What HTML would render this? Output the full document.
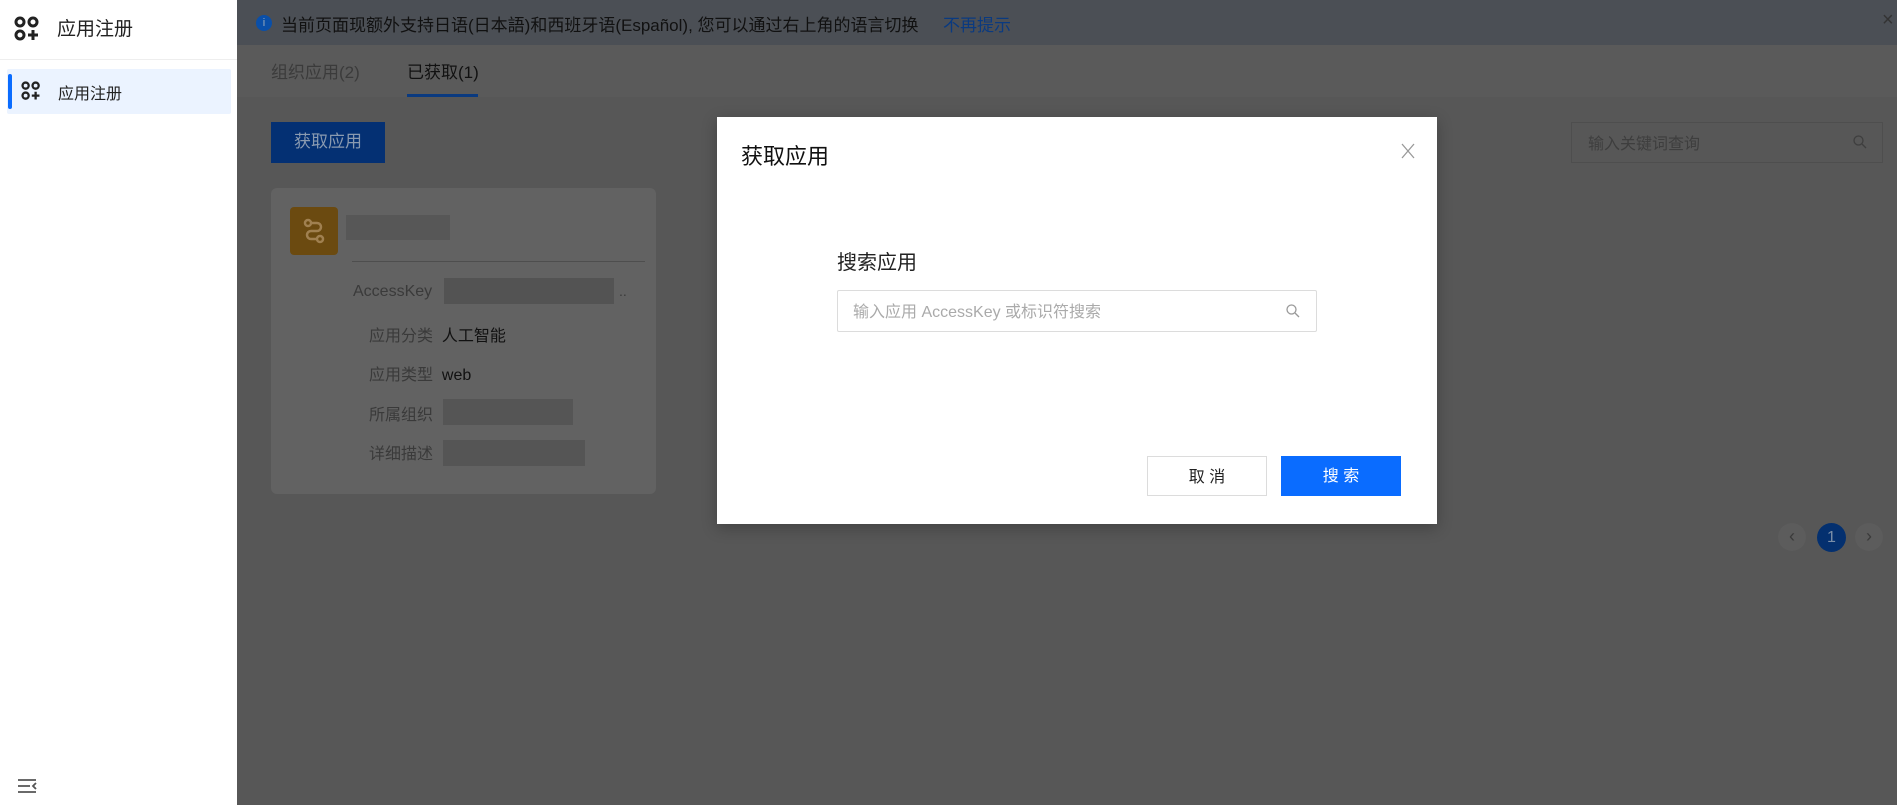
<!DOCTYPE html>
<html><head><meta charset="utf-8"><style>
*{margin:0;padding:0;box-sizing:border-box}
body{width:1897px;height:805px;overflow:hidden;position:relative;background:#575757;font-family:"Liberation Sans","Noto Sans CJK SC",sans-serif}
.abs{position:absolute}
.sb{left:0;top:0;width:237px;height:805px;background:#fff}
.t{white-space:nowrap}
</style></head><body>
<div class="abs sb">
  <svg class="abs" style="left:14px;top:16px" width="26" height="26" viewBox="0 0 26 26" fill="none" stroke="#222" stroke-width="3"><rect x="2" y="2" width="8" height="8" rx="4"/><rect x="15" y="2" width="8" height="8" rx="4"/><rect x="2" y="15" width="8" height="8" rx="4"/><path d="M19 14v10M14 19h10"/></svg>
  <div class="abs t" style="left:57px;top:14px;font-size:19px;color:#222">应用注册</div>
  <div class="abs" style="left:0;top:59px;width:237px;height:1px;background:#eee"></div>
  <div class="abs" style="left:7px;top:69px;width:224px;height:45px;background:#ebf3ff;border-radius:2px"></div>
  <div class="abs" style="left:8px;top:74px;width:4px;height:35px;background:#0a6cff;border-radius:2px"></div>
  <svg class="abs" style="left:21px;top:81px" width="20" height="20" viewBox="0 0 26 26" fill="none" stroke="#222" stroke-width="3"><rect x="2" y="2" width="8" height="8" rx="4"/><rect x="15" y="2" width="8" height="8" rx="4"/><rect x="2" y="15" width="8" height="8" rx="4"/><path d="M19 14v10M14 19h10"/></svg>
  <div class="abs t" style="left:58px;top:80px;font-size:16px;color:#222">应用注册</div>
  <svg class="abs" style="left:17px;top:778px" width="20" height="16" viewBox="0 0 20 16" stroke="#555" stroke-width="1.8"><path d="M1 2h18M1 8h12M1 14h18M19 5l-3 3 3 3" fill="none"/></svg>
</div>
<div class="abs" style="left:237px;top:0;width:1660px;height:45px;background:#4b4f55"></div>
<div class="abs" style="left:256px;top:15px;width:16px;height:16px;border-radius:50%;background:#0a4fa8;color:#9ab;font-size:11px;text-align:center;line-height:16px">i</div>
<div class="abs t" style="left:281px;top:11px;font-size:17px;color:#111">当前页面现额外支持日语(日本語)和西班牙语(Español), 您可以通过右上角的语言切换</div>
<div class="abs t" style="left:943px;top:11px;font-size:17px;color:#0a3a80">不再提示</div>
<div class="abs t" style="left:1882px;top:9px;font-size:20px;color:#333">×</div>
<div class="abs" style="left:237px;top:45px;width:1660px;height:52px;background:#5a5a5a"></div>
<div class="abs t" style="left:271px;top:58px;font-size:17px;color:#3b3b3b">组织应用(2)</div>
<div class="abs t" style="left:407px;top:58px;font-size:17px;color:#111">已获取(1)</div>
<div class="abs" style="left:407px;top:94px;width:71px;height:3px;background:#0a3a80"></div>
<div class="abs t" style="left:271px;top:122px;width:114px;height:41px;background:#043073;color:#8a9ab0;font-size:17px;text-align:center;line-height:39px">获取应用</div>
<div class="abs" style="left:1571px;top:122px;width:312px;height:41px;border:1px solid #4e4e4e"></div>
<div class="abs t" style="left:1588px;top:130px;font-size:16px;color:#3e3e3e">输入关键词查询</div>
<svg class="abs" style="left:1852px;top:134px" width="16" height="16" viewBox="0 0 16 16" fill="none" stroke="#3e3e3e" stroke-width="1.3"><circle cx="6.5" cy="6.5" r="4.5"/><path d="M10 10l4 4"/></svg>
<div class="abs" style="left:271px;top:188px;width:385px;height:306px;background:#626262;border-radius:6px"></div>
<div class="abs" style="left:290px;top:207px;width:48px;height:48px;background:#6b4a10;border-radius:4px"></div>
<svg class="abs" style="left:302px;top:218px" width="24" height="26" viewBox="0 0 24 26" fill="none" stroke="#a08050" stroke-width="2.5"><circle cx="6" cy="5" r="3"/><circle cx="18" cy="21" r="3"/><path d="M9 5h6a4 4 0 010 8H9a4 4 0 000 8h6"/></svg>
<div class="abs" style="left:346px;top:215px;width:104px;height:25px;background:#575757"></div>
<div class="abs" style="left:352px;top:261px;width:293px;height:1px;background:#4e4e4e"></div>
<div class="abs t" style="left:353px;top:283px;font-size:16px;color:#3a3a3a">AccessKey</div>
<div class="abs" style="left:444px;top:278px;width:170px;height:26px;background:#535353"></div>
<div class="abs t" style="left:619px;top:283px;font-size:14px;color:#3a3a3a">..</div>
<div class="abs t" style="left:369px;top:322px;font-size:16px;color:#3a3a3a">应用分类 <span style="color:#111">&nbsp;人工智能</span></div>
<div class="abs t" style="left:369px;top:361px;font-size:16px;color:#3a3a3a">应用类型 <span style="color:#111">&nbsp;web</span></div>
<div class="abs t" style="left:369px;top:401px;font-size:16px;color:#3a3a3a">所属组织</div>
<div class="abs" style="left:443px;top:399px;width:130px;height:26px;background:#555"></div>
<div class="abs t" style="left:369px;top:440px;font-size:16px;color:#3a3a3a">详细描述</div>
<div class="abs" style="left:443px;top:440px;width:142px;height:26px;background:#555"></div>
<div class="abs" style="left:1778px;top:523px;width:28px;height:28px;border-radius:50%;background:#5c5c5c;color:#3a3a3a;text-align:center;line-height:26px;font-size:18px">‹</div>
<div class="abs" style="left:1817px;top:523px;width:29px;height:29px;border-radius:50%;background:#04306f;color:#7a8ea8;text-align:center;line-height:29px;font-size:16px">1</div>
<div class="abs" style="left:1855px;top:523px;width:28px;height:28px;border-radius:50%;background:#5c5c5c;color:#3a3a3a;text-align:center;line-height:26px;font-size:18px">›</div>
<div class="abs" style="left:717px;top:117px;width:720px;height:407px;background:#fff;box-shadow:0 4px 14px rgba(0,0,0,.25)">
  <div class="abs t" style="left:24px;top:22px;font-size:22px;color:#111">获取应用</div>
  <svg class="abs" style="left:683px;top:26px" width="16" height="16" viewBox="0 0 16 16" stroke="#999" stroke-width="1.3"><path d="M2 1l12 14M14 1L2 15"/></svg>
  <div class="abs t" style="left:120px;top:129px;font-size:20px;color:#222">搜索应用</div>
  <div class="abs" style="left:120px;top:173px;width:480px;height:42px;border:1px solid #dcdcdc;border-radius:2px"></div>
  <div class="abs t" style="left:136px;top:181px;font-size:16px;color:#aaa">输入应用 AccessKey 或标识符搜索</div>
  <svg class="abs" style="left:568px;top:186px" width="16" height="16" viewBox="0 0 16 16" fill="none" stroke="#999" stroke-width="1.3"><circle cx="6.5" cy="6.5" r="4.5"/><path d="M10 10l4 4"/></svg>
  <div class="abs t" style="left:430px;top:339px;width:120px;height:40px;border:1px solid #dcdcdc;font-size:16px;color:#222;text-align:center;line-height:42px">取 消</div>
  <div class="abs t" style="left:564px;top:339px;width:120px;height:40px;background:#0a6cff;font-size:16px;color:#fff;text-align:center;line-height:42px">搜 索</div>
</div>
</body></html>
